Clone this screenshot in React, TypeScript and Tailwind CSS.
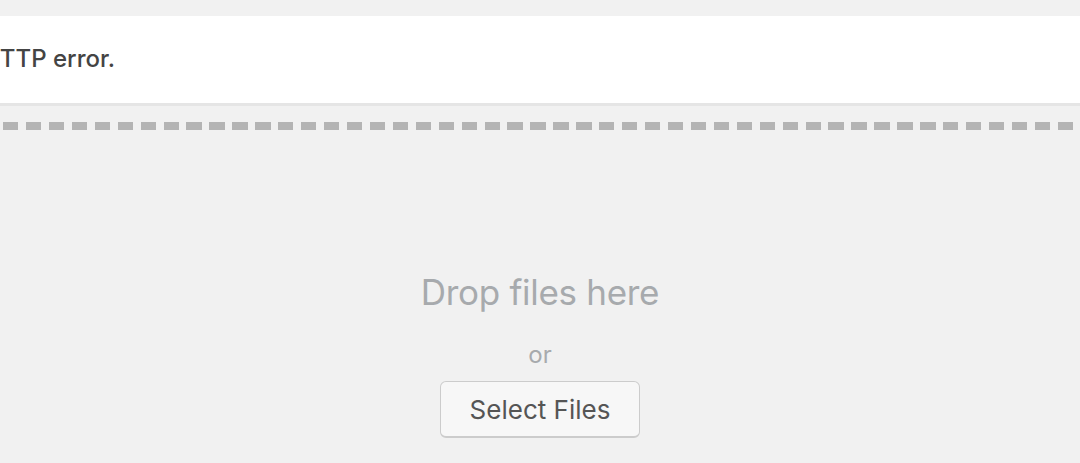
import React from "react";

export default function App() {
  return (
    <div className="min-h-[463px] w-full overflow-hidden bg-[#f1f1f1] font-['Inter','Liberation_Sans',sans-serif]">
      <div className="pt-4">
        <div className="flex h-[90px] items-center overflow-hidden border-b-[3px] border-[#e5e5e5] bg-white">
          <p className="-ml-[18px] -mt-[2px] whitespace-nowrap text-[24px] font-medium text-[#444]">HTTP error.</p>
        </div>
      </div>

      <div className="mt-4 flex flex-col items-center">
        <div className="h-2 w-full bg-[repeating-linear-gradient(90deg,transparent_0_3px,#b4b4b4_3px_18.3px,transparent_18.3px_22.93px)]" />
        <p className="mt-[142px] text-[35px] leading-[40px] tracking-[-0.3px] text-[#a7aaad]">Drop files here</p>
        <p className="mt-[30px] text-[24px] leading-[26px] text-[#a7aaad]">or</p>
        <button className="mt-[13px] h-[57px] w-[200px] rounded-[6px] border border-[#cccccc] border-b-2 bg-[#f7f7f7] text-[26px] text-[#555]">
          Select Files
        </button>
      </div>
    </div>
  );
}
